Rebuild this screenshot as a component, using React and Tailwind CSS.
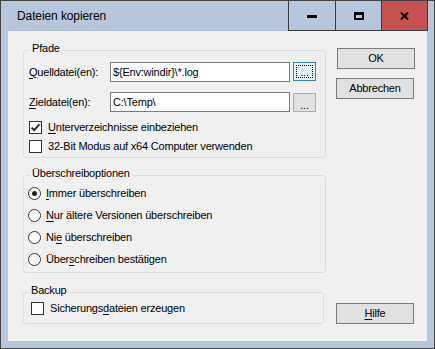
function U({ children }) {
  return <span className="underline underline-offset-[2px]">{children}</span>;
}

function CheckBox({ checked }) {
  return (
    <div className="w-[13px] h-[13px] border border-[#333333] bg-white flex items-center justify-center shrink-0">
      {checked && (
        <svg width="11" height="11" viewBox="0 0 11 11">
          <path d="M1.6 5.6 L4.2 8.2 L9.4 2.4" fill="none" stroke="#222" strokeWidth="1.9" />
        </svg>
      )}
    </div>
  );
}

function Radio({ checked }) {
  return (
    <div className="w-[13px] h-[13px] rounded-full border border-[#333333] bg-white flex items-center justify-center shrink-0">
      {checked && <div className="w-[5px] h-[5px] rounded-full bg-[#222]" />}
    </div>
  );
}

function Button({ children, className }) {
  return (
    <div className={"w-[78px] h-[21px] border border-[#7a7a7a] bg-[#e1e1e1] flex items-center justify-center leading-[13px] " + className}>
      {children}
    </div>
  );
}

export default function App() {
  return (
    <div className="w-[435px] h-[349px] border border-[#434343] bg-[#b6c7dc] flex flex-col text-black [font-family:'Liberation_Sans',Arial,sans-serif]">
      {/* Title bar */}
      <div className="h-[30px] flex shrink-0">
        <div className="flex-1 pl-[16px] leading-[30px] text-[12px] tracking-[-0.1px]">Dateien kopieren</div>
        <div className="flex mr-[6px] h-[30px] border-b border-[#3a3a3a]">
          <div className="w-[47px] border-l border-[#3a3a3a] flex items-center justify-center">
            <div className="w-[10px] h-[3px] bg-black mt-[2px]" />
          </div>
          <div className="w-[46px] border-l border-[#3a3a3a] flex items-center justify-center">
            <div className="w-[10px] h-[8px] border-2 border-t-[3px] border-black" />
          </div>
          <div className="w-[47px] border-l border-r border-[#3a3a3a] bg-[#c75050] flex items-center justify-center">
            <svg width="9" height="8" viewBox="0 0 9 8">
              <path d="M1 0.6 L8 7.4 M8 0.6 L1 7.4" stroke="#000" strokeWidth="2.1" fill="none" />
            </svg>
          </div>
        </div>
      </div>

      {/* Client area */}
      <div className="flex-1 mx-[7px] mb-[7px] bg-[#f0f0f0] flex text-[11px] tracking-[-0.2px] leading-[13px]">
        {/* Left column */}
        <div className="pl-[15px] w-[318px] flex flex-col">
          {/* Pfade */}
          <div className="mt-[19px] w-[303px] h-[108px] border border-[#d5dfe5] rounded-[3px] flex flex-col">
            <div className="-mt-[9px] ml-[6px] px-[2px] bg-[#f0f0f0] self-start">Pfade</div>
            <div className="mt-[7px] pl-[5px] flex items-start">
              <div className="w-[81px] h-[20px] flex items-center"><U>Q</U>uelldatei(en):</div>
              <div className="w-[180px] h-[20px] border border-[#7a7a7a] bg-white pl-[2px] flex items-center">{"${Env:windir}\\*.log"}</div>
              <div className="ml-[3px] w-[23px] h-[19px] border border-[#3c7fb1] bg-[#e5f1fb] p-[2px] flex">
                <div className="flex-1 border border-dotted border-black flex items-end justify-center leading-[10px]">...</div>
              </div>
            </div>
            <div className="mt-[10px] pl-[5px] flex items-start">
              <div className="w-[81px] h-[20px] flex items-center"><U>Z</U>ieldatei(en):</div>
              <div className="w-[180px] h-[20px] border border-[#7a7a7a] bg-white pl-[2px] flex items-center">{"C:\\Temp\\"}</div>
              <div className="ml-[3px] mt-[1px] w-[23px] h-[19px] border border-[#adadad] bg-[#e1e1e1] flex items-end justify-center leading-[12px]">...</div>
            </div>
            <div className="mt-[6px] pl-[5px] h-[19px] flex items-center">
              <CheckBox checked />
              <div className="ml-[6px]"><U>U</U>nterverzeichnisse einbeziehen</div>
            </div>
            <div className="pl-[5px] h-[19px] flex items-center">
              <CheckBox />
              <div className="ml-[6px]">32-Bit Modus auf x64 Computer verwenden</div>
            </div>
          </div>

          {/* Überschreiboptionen */}
          <div className="mt-[17px] w-[303px] h-[98px] border border-[#d5dfe5] rounded-[3px] flex flex-col">
            <div className="-mt-[9px] ml-[6px] px-[2px] bg-[#f0f0f0] self-start">Überschreiboptionen</div>
            <div className="mt-[2px] pl-[4px] h-[22px] flex items-center">
              <Radio checked />
              <div className="ml-[5px]"><U>I</U>mmer überschreiben</div>
            </div>
            <div className="pl-[4px] h-[22px] flex items-center">
              <Radio />
              <div className="ml-[5px]"><U>N</U>ur ältere Versionen überschreiben</div>
            </div>
            <div className="pl-[4px] h-[22px] flex items-center">
              <Radio />
              <div className="ml-[5px]">Ni<U>e</U> überschreiben</div>
            </div>
            <div className="pl-[4px] h-[22px] flex items-center">
              <Radio />
              <div className="ml-[5px]">Über<U>s</U>chreiben bestätigen</div>
            </div>
          </div>

          {/* Backup */}
          <div className="mt-[19px] w-[301px] h-[32px] border border-[#d5dfe5] rounded-[3px] flex flex-col">
            <div className="-mt-[9px] ml-[5px] px-[2px] bg-[#f0f0f0] self-start">Backup</div>
            <div className="mt-[2px] pl-[7px] h-[19px] flex items-center">
              <CheckBox />
              <div className="ml-[6px]">Sicherungs<U>d</U>ateien erzeugen</div>
            </div>
          </div>
        </div>

        {/* Right column */}
        <div className="ml-[10px] pt-[17px] pb-[17px] flex flex-col">
          <Button className="ml-[1px]">OK</Button>
          <Button className="mt-[9px]">Abbrechen</Button>
          <Button className="mt-auto"><U>H</U>ilfe</Button>
        </div>
      </div>
    </div>
  );
}
